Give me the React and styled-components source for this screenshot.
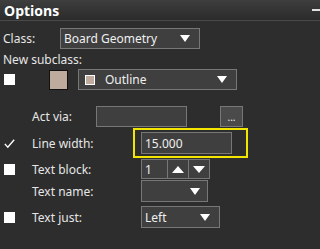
import styled, { createGlobalStyle } from "styled-components";

const GlobalStyle = createGlobalStyle`
  html, body {
    margin: 0;
    padding: 0;
    background: #2d2d2d;
  }
  body {
    font-family: "Noto Sans", "Open Sans", sans-serif;
    font-size: 12px;
    color: #e6e6e6;
  }
`;

const Panel = styled.div`
  width: 320px;
  height: 249px;
  overflow: hidden;
  background: #2d2d2d;
`;

const Header = styled.div`
  display: flex;
  align-items: center;
  justify-content: space-between;
  height: 20px;
  padding-left: 4px;
  background: linear-gradient(#3e3e3e, #2b2b2b);
  border-bottom: 1px solid #4a4a4a;
`;

const Title = styled.span`
  font-family: "Open Sans", "Noto Sans", sans-serif;
  font-weight: 700;
  font-size: 14px;
  color: #ffffff;
`;

const Minimize = styled.span`
  width: 8px;
  height: 2px;
  background: #e0e0e0;
`;

const Row = styled.div`
  display: flex;
  align-items: center;
  height: ${({ $h }) => $h || 21}px;
  margin-top: ${({ $mt }) => $mt || 0}px;
  padding-left: ${({ $pl }) => $pl || 0}px;
`;

const Label = styled.span`
  width: ${({ $w }) => $w}px;
  flex: none;
  white-space: nowrap;
`;

const Check = styled.span`
  width: 11px;
  height: 11px;
  margin-left: 4px;
  margin-right: 17px;
  flex: none;
  background: ${({ $on }) => ($on ? "transparent" : "#ffffff")};
  display: flex;
  align-items: center;
  justify-content: center;
`;

const Swatch = styled.span`
  width: 17px;
  height: 18px;
  margin-left: 17px;
  margin-right: 10px;
  background: #bfab9d;
  border: 1px solid #111;
  flex: none;
`;

const Box = styled.div`
  display: flex;
  align-items: center;
  justify-content: space-between;
  box-sizing: border-box;
  width: ${({ $w }) => $w}px;
  height: ${({ $h }) => $h || 21}px;
  padding: 0 5px 0 ${({ $pad }) => ($pad == null ? 3 : $pad)}px;
  background: #3f3f3f;
  border: 1px solid #777777;
  color: #f0f0f0;
  flex: none;
`;

const Arrow = styled.span`
  width: 0;
  height: 0;
  border-left: 5px solid transparent;
  border-right: 5px solid transparent;
  border-top: 7px solid #ffffff;
  margin-right: ${({ $mr }) => $mr || 0}px;
`;

const UpArrow = styled.span`
  width: 0;
  height: 0;
  border-left: 6px solid transparent;
  border-right: 6px solid transparent;
  border-bottom: 7px solid #ffffff;
`;

const DownArrow = styled(UpArrow)`
  border-bottom: none;
  border-top: 7px solid #ffffff;
`;

const MiniSwatch = styled.span`
  width: 8px;
  height: 8px;
  border: 1px solid #ffffff;
  background: #bfab9d;
  margin-right: 10px;
`;

const Left = styled.span`
  display: flex;
  align-items: center;
`;

const Ellipsis = styled.div`
  box-sizing: border-box;
  width: 23px;
  height: 21px;
  margin-left: 33px;
  background: #4a4a4a;
  border: 1px solid #777777;
  display: flex;
  align-items: flex-end;
  justify-content: center;
  padding-bottom: 4px;
  font-size: 10px;
  line-height: 1;
  color: #f0f0f0;
  flex: none;
`;

const Highlight = styled.div`
  box-sizing: border-box;
  width: 115px;
  height: 30px;
  border: 2px solid #f2e600;
  display: flex;
  align-items: center;
  padding-left: 6px;
  flex: none;
`;

const SpinBtn = styled.div`
  box-sizing: border-box;
  width: 22px;
  height: 20px;
  margin-left: -1px;
  background: #3f3f3f;
  border: 1px solid #777777;
  display: flex;
  align-items: center;
  justify-content: center;
  flex: none;
`;

const Tick = () => (
  <svg width="13" height="11" viewBox="0 0 13 11">
    <path d="M1 6 L4.5 10 L12 1" fill="none" stroke="#ffffff" strokeWidth="1.6" />
  </svg>
);

export default function App() {
  return (
    <>
      <GlobalStyle />
      <Panel>
        <Header>
          <Title>Options</Title>
          <Minimize />
        </Header>

        <Row $mt={7} $pl={3}>
          <Label $w={57}>Class:</Label>
          <Box $w={140}>
            <span>Board Geometry</span>
            <Arrow $mr={4} />
          </Box>
        </Row>

        <Row $h={20} $pl={3}>
          <Label>New subclass:</Label>
        </Row>

        <Row>
          <Check />
          <Swatch />
          <Box $w={159} $pad={6}>
            <Left>
              <MiniSwatch />
              Outline
            </Left>
            <Arrow $mr={4} />
          </Box>
        </Row>

        <Row $mt={16} $pl={32}>
          <Label $w={64}>Act via:</Label>
          <Box $w={91} />
          <Ellipsis>...</Ellipsis>
        </Row>

        <Row $h={30} $mt={1}>
          <Check $on>
            <Tick />
          </Check>
          <Label $w={101}>Line width:</Label>
          <Highlight>
            <Box $w={91} $h={22}>
              15.000
            </Box>
          </Highlight>
        </Row>

        <Row $h={20} $mt={1}>
          <Check />
          <Label $w={109}>Text block:</Label>
          <Box $w={27} $h={20}>
            1
          </Box>
          <SpinBtn>
            <UpArrow />
          </SpinBtn>
          <SpinBtn>
            <DownArrow />
          </SpinBtn>
        </Row>

        <Row $h={22} $mt={1} $pl={32}>
          <Label $w={109}>Text name:</Label>
          <Box $w={67} $h={22}>
            <span />
            <Arrow $mr={2} />
          </Box>
        </Row>

        <Row $h={22} $mt={4}>
          <Check />
          <Label $w={109}>Text just:</Label>
          <Box $w={79} $h={22}>
            <span>Left</span>
            <Arrow $mr={4} />
          </Box>
        </Row>
      </Panel>
    </>
  );
}
